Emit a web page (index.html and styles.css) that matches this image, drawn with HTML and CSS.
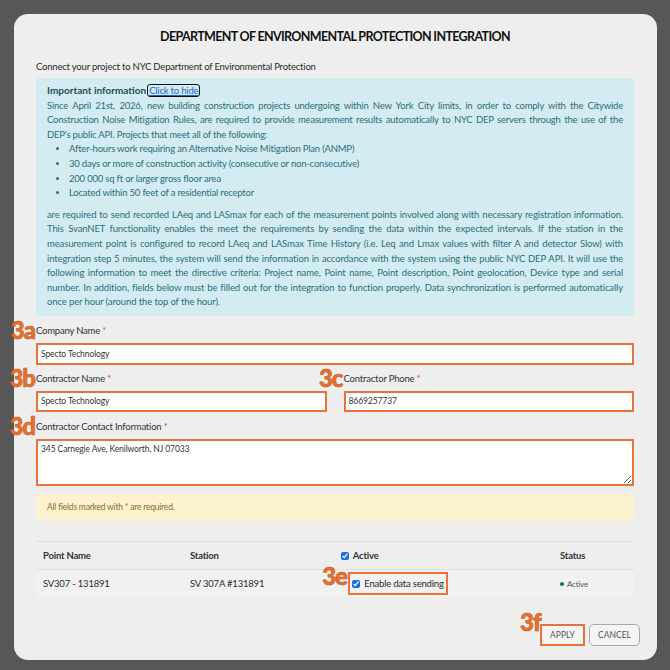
FILE: index.html
```html
<!DOCTYPE html>
<html lang="en">
<head>
    <meta charset="UTF-8">
    <meta name="viewport" content="width=device-width, initial-scale=1.0">
    <title>DEP Integration</title>
    <link rel="stylesheet" href="styles.css">
</head>
<body>
    <div class="backdrop">
        <div class="modal">
            <h1 class="modal-title">DEPARTMENT OF ENVIRONMENTAL PROTECTION INTEGRATION</h1>
            <p class="intro">Connect your project to NYC Department of Environmental Protection</p>

            <div class="alert alert-info">
                <p><strong>Important information</strong><a href="#" class="hide-link">Click to hide</a></p>
                <p class="justify">Since April 21st, 2026, new building construction projects undergoing within New York City limits, in order to comply with the Citywide Construction Noise Mitigation Rules, are required to provide measurement results automatically to NYC DEP servers through the use of the DEP's public API. Projects that meet all of the following:</p>
                <ul>
                    <li>After-hours work requiring an Alternative Noise Mitigation Plan (ANMP)</li>
                    <li>30 days or more of construction activity (consecutive or non-consecutive)</li>
                    <li>200 000 sq ft or larger gross floor area</li>
                    <li>Located within 50 feet of a residential receptor</li>
                </ul>
                <p class="justify details">are required to send recorded LAeq and LASmax for each of the measurement points involved along with necessary registration information. This SvanNET functionality enables the meet the requirements by sending the data within the expected intervals. If the station in the measurement point is configured to record LAeq and LASmax Time History (i.e. Leq and Lmax values with filter A and detector Slow) with integration step 5 minutes, the system will send the information in accordance with the system using the public NYC DEP API. It will use the following information to meet the directive criteria: Project name, Point name, Point description, Point geolocation, Device type and serial number. In addition, fields below must be filled out for the integration to function properly. Data synchronization is performed automatically once per hour (around the top of the hour).</p>
            </div>

            <div class="field">
                <label for="company"><span class="step">3a</span>Company Name <span class="req">*</span></label>
                <input type="text" id="company" class="marked" value="Specto Technology">
            </div>

            <div class="field-row">
                <div class="field">
                    <label for="contractor"><span class="step">3b</span>Contractor Name <span class="req">*</span></label>
                    <input type="text" id="contractor" class="marked" value="Specto Technology">
                </div>
                <div class="field">
                    <label for="phone"><span class="step">3c</span>Contractor Phone <span class="req">*</span></label>
                    <input type="text" id="phone" class="marked" value="8669257737">
                </div>
            </div>

            <div class="field">
                <label for="contact"><span class="step">3d</span>Contractor Contact Information <span class="req">*</span></label>
                <textarea id="contact" class="marked">345 Carnegie Ave, Kenilworth, NJ 07033</textarea>
            </div>

            <div class="alert alert-warning">All fields marked with * are required.</div>

            <table class="points">
                <thead>
                    <tr>
                        <th class="col-name">Point Name</th>
                        <th class="col-station">Station</th>
                        <th class="col-active"><input type="checkbox" checked> Active</th>
                        <th class="col-status">Status</th>
                    </tr>
                </thead>
                <tbody>
                    <tr>
                        <td>SV307 - 131891</td>
                        <td>SV 307A #131891</td>
                        <td>
                            <label class="send-toggle"><span class="step">3e</span><input type="checkbox" checked> Enable data sending</label>
                        </td>
                        <td><span class="status"><span class="dot"></span>Active</span></td>
                    </tr>
                </tbody>
            </table>

            <div class="actions">
                <button class="btn btn-apply"><span class="step">3f</span>APPLY</button>
                <button class="btn btn-cancel">CANCEL</button>
            </div>
        </div>
    </div>
</body>
</html>
```

FILE: styles.css
```css
* {
    box-sizing: border-box;
}

body {
    margin: 0;
    background: #575757;
    font-family: Lato, 'Liberation Sans', sans-serif;
    color: #2a2a2a;
}

.backdrop {
    padding: 14px 13px 10px 14px;
}

.modal {
    background: #eeeeee;
    border-radius: 14px;
    padding: 14px 23px 14px 22px;
    letter-spacing: -0.2px;
}

.modal-title {
    margin: 0;
    text-align: center;
    font-size: 12.5px;
    line-height: 18px;
    font-weight: 700;
    letter-spacing: -0.65px;
    color: #111;
}

.intro {
    margin: 14px 0 4px;
    font-size: 9.5px;
    line-height: 14px;
}

.alert {
    border-radius: 3px;
    font-size: 9.5px;
}

.alert p {
    margin: 0;
}

.alert-info {
    background: #d3ecf1;
    color: #2c6e7b;
    line-height: 14.6px;
    padding: 6px 11px 6px;
}

.alert-info strong {
    color: #1c4f59;
    font-size: 10px;
    line-height: 1;
    letter-spacing: 0;
}

.hide-link {
    color: #1b63c6;
    margin-left: 1px;
    padding: 0 1px;
    border: 1.5px solid #111;
    border-radius: 3px;
}

.justify {
    text-align: justify;
}

.details {
    letter-spacing: -0.12px;
}

.alert-info ul {
    margin: 0 0 7px;
    padding-left: 22px;
}

.field {
    margin-top: 8px;
}

.field label {
    position: relative;
    display: block;
    font-size: 9.5px;
    line-height: 14px;
    color: #333;
}

.req {
    color: #e0463c;
}

/* orange numbered callouts */
.step {
    position: absolute;
    right: calc(100% + 1px);
    top: -6px;
    font-size: 24px;
    line-height: 24px;
    font-weight: 900;
    letter-spacing: -1px;
    color: #e7712d;
    -webkit-text-stroke: 0.6px #c85a1c;
}

.marked {
    display: block;
    width: 100%;
    margin-top: 5px;
    border: 2px solid #e9743a;
    background: #fff;
    font-family: inherit;
    font-size: 8.5px;
    letter-spacing: -0.1px;
    color: #333;
    padding: 0 3px;
    outline: none;
}

input.marked {
    height: 22px;
}

.field-row {
    display: grid;
    grid-template-columns: 1fr 1fr;
    column-gap: 17px;
}

.field-row .field input.marked {
    height: 21px;
}

.field-row .field {
    margin-top: 7px;
}

textarea.marked {
    height: 47px;
    padding-top: 3px;
    resize: vertical;
}

.alert-warning {
    margin-top: 8px;
    background: #fcf2cf;
    color: #8a6d2b;
    height: 27px;
    line-height: 27px;
    padding: 0 11px;
    font-size: 8.5px;
}

.points {
    width: 100%;
    margin-top: 20px;
    border-collapse: collapse;
    font-size: 9.5px;
}

.points th,
.points td {
    text-align: left;
    padding: 0 7px;
    height: 28px;
}

.points th {
    font-weight: 700;
    color: #333;
    border-top: 1px solid #dedede;
    border-bottom: 1px solid #dedede;
}

.points td {
    background: #f1f1f1;
}

.col-name { width: 147px; }
.col-station { width: 151px; }
.col-active { width: 219px; }

.points input[type="checkbox"] {
    width: 8px;
    height: 8px;
    margin: 0 2px 0 0;
    accent-color: #1c6fe0;
    vertical-align: -1px;
}

.send-toggle {
    position: relative;
    display: inline-block;
    margin-left: 7px;
    border: 2px solid #e9743a;
    padding: 3px 2px;
    line-height: 13px;
}

.send-toggle .step {
    right: calc(100% + 3px);
    top: -10px;
}

.status {
    font-size: 8px;
    color: #555;
}

.dot {
    display: inline-block;
    width: 4px;
    height: 4px;
    border-radius: 50%;
    background: #1e6b55;
    margin-right: 3px;
    vertical-align: 1px;
}

.actions {
    display: flex;
    justify-content: flex-end;
    gap: 4px;
    margin: 27px -6px 0 0;
}

.btn {
    position: relative;
    height: 22px;
    font-family: inherit;
    font-size: 8.5px;
    color: #555;
    background: #f4f4f4;
}

.btn-apply {
    width: 45px;
    border: 2px solid #e9743a;
}

.btn-apply .step {
    right: auto;
    left: -22px;
    top: -16px;
}

.btn-cancel {
    width: 51px;
    border: 1px solid #a9a9a9;
    border-radius: 5px;
}
```
